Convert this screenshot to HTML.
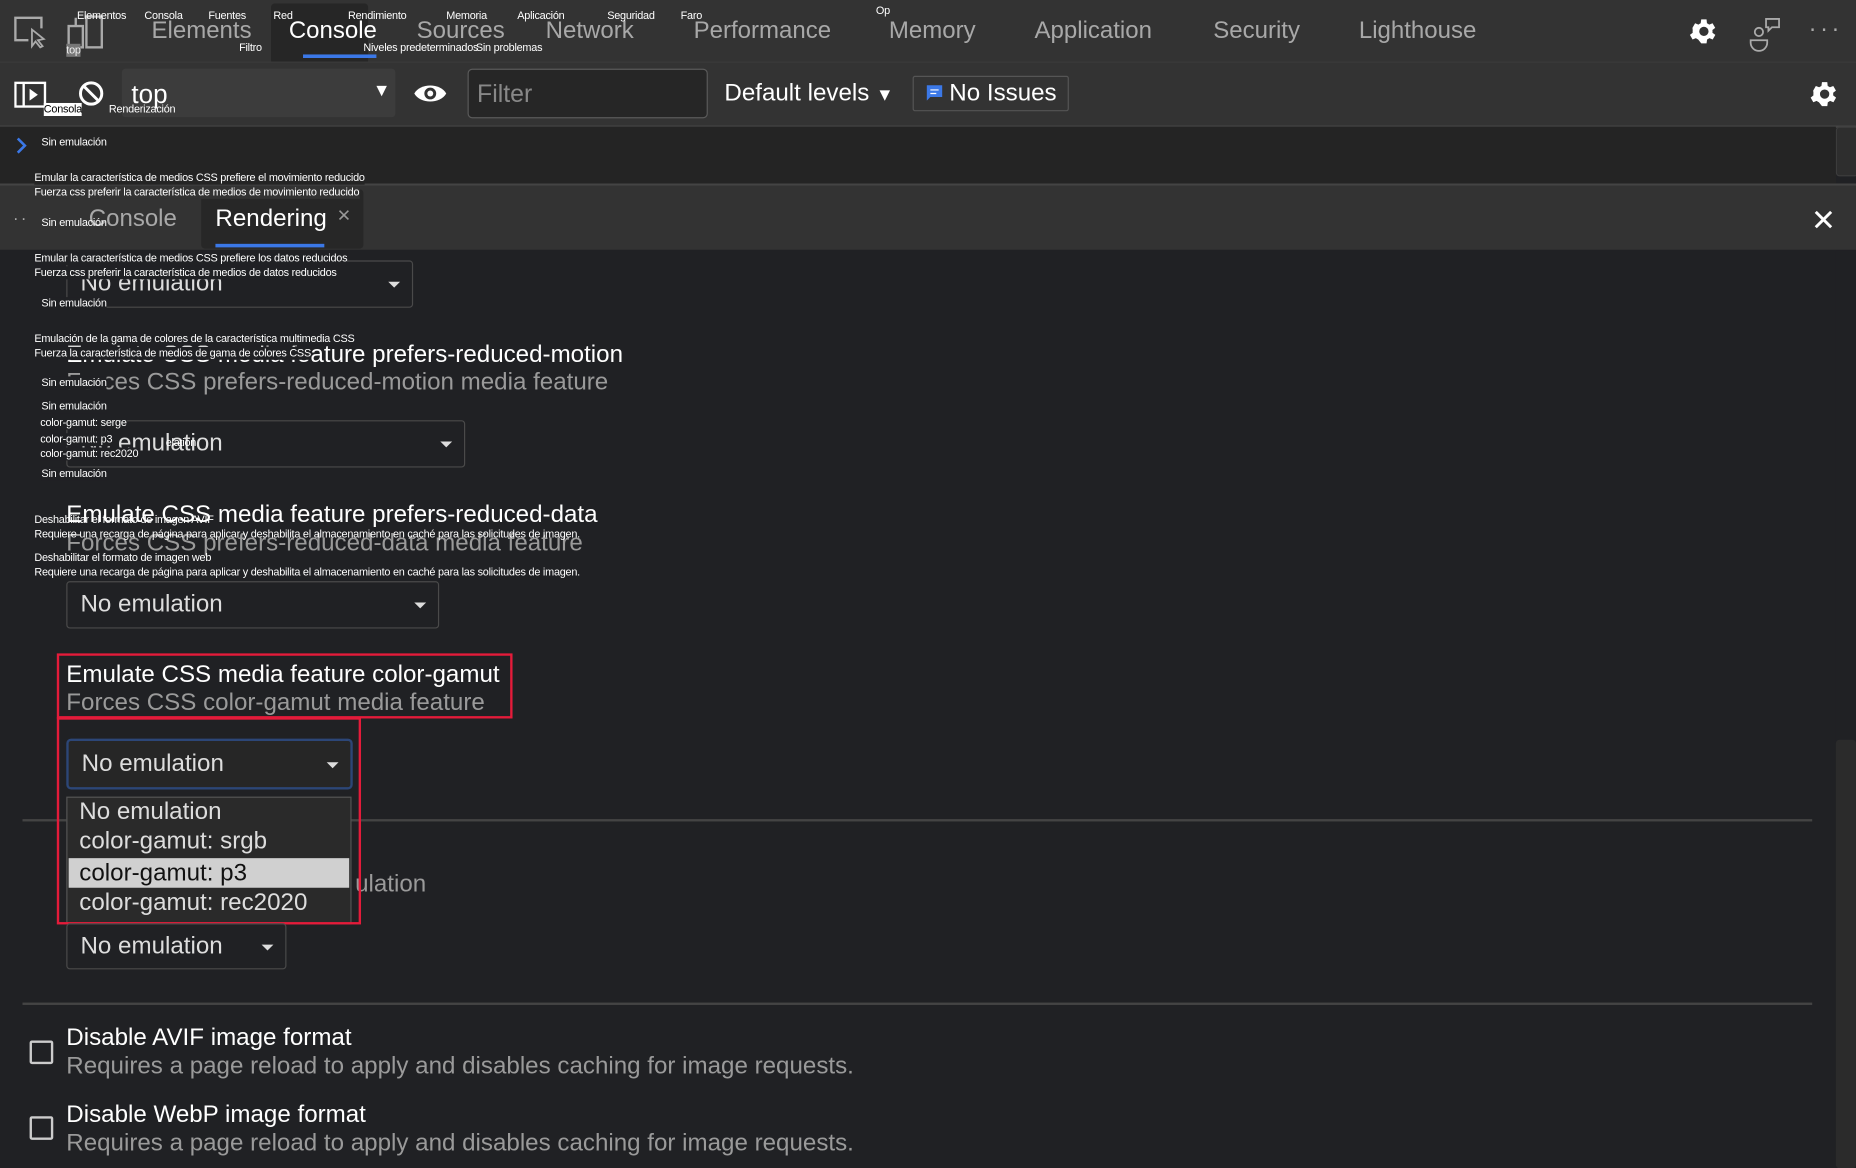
<!DOCTYPE html>
<html><head><meta charset="utf-8"><style>
html,body{margin:0;padding:0;width:1856px;height:1168px;overflow:hidden;background:#202124}
#r{position:relative;width:1568px;height:987px;transform:scale(1.18367);transform-origin:0 0;font-family:"Liberation Sans",sans-serif;background:#202124;overflow:hidden}
.a{position:absolute;white-space:nowrap}
.t{font-size:20.3px;line-height:24px;color:#a8a8a8}
.s{font-size:9.2px;line-height:11px;color:#fff;letter-spacing:-0.2px;background:#202124}
.s2{font-size:9.2px;line-height:11px;color:#fff;letter-spacing:-0.2px}
.h{font-size:20.4px;line-height:24px;color:#fff}
.sub{font-size:20.4px;line-height:24px;color:#9a9a9a}
.sel{position:absolute;border:1.5px solid #4a4a4a;border-radius:3px;background:#202124;box-sizing:border-box}
.sel span{position:absolute;left:11px;top:50%;transform:translateY(-50%);font-size:20.4px;color:#ddd}
.sel i{position:absolute;right:10px;top:50%;margin-top:-2px;border-left:5px solid transparent;border-right:5px solid transparent;border-top:5px solid #ddd}
</style></head><body><div id="r">
<div class="a" style="left:0;top:0;width:1568px;height:52px;background:#333"></div>
<div class="a" style="left:229px;top:3px;width:82px;height:51px;background:#262626;border-radius:3px"></div>
<div class="a" style="left:256px;top:46px;width:62px;height:3px;background:#3b78e7"></div>
<svg class="a" style="left:10px;top:12px" width="32" height="30" viewBox="0 0 32 30"><path d="M14 22H3V3h22v9" fill="none" stroke="#aaa" stroke-width="2"/><path d="M17 13l0 14 3-4 4 5 2-1-4-5 5-1z" fill="#333" stroke="#aaa" stroke-width="1.5"/></svg>
<svg class="a" style="left:55px;top:12px" width="36" height="32" viewBox="0 0 36 32"><rect x="18" y="2" width="13" height="26" fill="none" stroke="#aaa" stroke-width="2"/><rect x="3" y="10" width="12" height="18" fill="none" stroke="#aaa" stroke-width="2"/><path d="M9 3v7" stroke="#aaa" stroke-width="2"/></svg>
<div class="a t" style="left:128px;top:14px">Elements</div>
<div class="a t" style="left:244px;top:14px;color:#fff">Console</div>
<div class="a t" style="left:352px;top:14px">Sources</div>
<div class="a t" style="left:461px;top:14px">Network</div>
<div class="a t" style="left:586px;top:14px">Performance</div>
<div class="a t" style="left:751px;top:14px">Memory</div>
<div class="a t" style="left:874px;top:14px">Application</div>
<div class="a t" style="left:1025px;top:14px">Security</div>
<div class="a t" style="left:1148px;top:14px">Lighthouse</div>
<div class="a s2" style="left:65px;top:8px">Elementos</div>
<div class="a s2" style="left:122px;top:8px">Consola</div>
<div class="a s2" style="left:176px;top:8px">Fuentes</div>
<div class="a s2" style="left:231px;top:8px">Red</div>
<div class="a s2" style="left:294px;top:8px">Rendimiento</div>
<div class="a s2" style="left:377px;top:8px">Memoria</div>
<div class="a s2" style="left:437px;top:8px">Aplicación</div>
<div class="a s2" style="left:513px;top:8px">Seguridad</div>
<div class="a s2" style="left:575px;top:8px">Faro</div>
<div class="a s2" style="left:740px;top:4px">Op</div>
<div class="a s2" style="left:202px;top:35px">Filtro</div>
<div class="a s2" style="left:307px;top:35px">Niveles predeterminados</div>
<div class="a s2" style="left:402px;top:35px">Sin problemas</div>
<div class="a s2" style="left:56px;top:37px;background:#777;color:#eee">top</div>
<svg class="a" style="left:1426px;top:13px" width="27" height="27" viewBox="0 0 24 24"><path fill="#fff" d="M19.4 13a7.5 7.5 0 0 0 0-2l2.1-1.6-2-3.5-2.5 1a7 7 0 0 0-1.7-1L15 3h-4l-.4 2.9a7 7 0 0 0-1.7 1l-2.5-1-2 3.5L4.6 11a7.5 7.5 0 0 0 0 2l-2.1 1.6 2 3.5 2.5-1a7 7 0 0 0 1.7 1L11 21h4l.4-2.9a7 7 0 0 0 1.7-1l2.5 1 2-3.5zM13 15.5a3.5 3.5 0 1 1 0-7 3.5 3.5 0 0 1 0 7z" transform="translate(-1 0)"/></svg>
<svg class="a" style="left:1476px;top:14px" width="30" height="30" viewBox="0 0 30 30"><circle cx="10" cy="13" r="3.5" fill="none" stroke="#aaa" stroke-width="1.5"/><path d="M3 20h14v2a7 7 0 0 1-14 0z" fill="none" stroke="#aaa" stroke-width="1.5"/><path d="M16 2h11v7h-6l-3 3v-3h-2z" fill="none" stroke="#aaa" stroke-width="1.5"/></svg>
<div class="a" style="left:1528px;top:14px;color:#aaa;font-size:20px;letter-spacing:3px">···</div>
<div class="a" style="left:0;top:52px;width:1568px;height:53px;background:#333;border-top:1px solid #3a3a3a;border-bottom:2px solid #444"></div>
<svg class="a" style="left:12px;top:68px" width="28" height="24" viewBox="0 0 28 24"><rect x="1" y="2" width="25" height="20" fill="none" stroke="#fff" stroke-width="2"/><path d="M8 2v20" stroke="#fff" stroke-width="2"/><path d="M13 7l7 5-7 5z" fill="#fff"/></svg>
<svg class="a" style="left:65px;top:67px" width="24" height="24" viewBox="0 0 24 24"><circle cx="12" cy="12" r="9" fill="none" stroke="#fff" stroke-width="2.5"/><path d="M6 6l12 12" stroke="#fff" stroke-width="2.5"/></svg>
<div class="a s2" style="left:37px;top:87px;background:#fff;color:#000">Consola</div>
<div class="a" style="left:103px;top:58px;width:231px;height:41px;background:#3c3c3c;border-radius:3px"></div>
<div class="a s2" style="left:92px;top:87px">Renderización</div>
<div class="a" style="left:111px;top:67px;font-size:22px;color:#fff">top</div>
<div class="a" style="left:315px;top:68px;color:#fff;font-size:15px">▼</div>
<svg class="a" style="left:349px;top:68px" width="29" height="22" viewBox="0 0 29 22"><path d="M1 11C6 2 23 2 28 11 23 20 6 20 1 11z" fill="#fff"/><circle cx="14.5" cy="11" r="5" fill="#333"/><circle cx="14.5" cy="11" r="2.5" fill="#fff"/></svg>
<div class="a" style="left:395px;top:58px;width:203px;height:42px;box-sizing:border-box;border:1.5px solid #5a5a5a;border-radius:4px;background:#262626"></div>
<div class="a" style="left:403px;top:68px;font-size:21px;color:#888">Filter</div>
<div class="a" style="left:612px;top:68px;font-size:20.4px;color:#fff">Default levels <span style="font-size:15px">▼</span></div>
<div class="a" style="left:771px;top:64px;width:132px;height:30px;box-sizing:border-box;border:1.5px solid #555;border-radius:2px"></div>
<svg class="a" style="left:782px;top:71px" width="15" height="15" viewBox="0 0 15 15"><path d="M1 1h13v10H4l-3 3z" fill="#3b78e7"/><path d="M4 5h7M4 8h5" stroke="#fff" stroke-width="1"/></svg>
<div class="a" style="left:802px;top:68px;font-size:20.4px;color:#fff">No Issues</div>
<svg class="a" style="left:1528px;top:66px" width="27" height="27" viewBox="0 0 24 24"><path fill="#fff" d="M19.4 13a7.5 7.5 0 0 0 0-2l2.1-1.6-2-3.5-2.5 1a7 7 0 0 0-1.7-1L15 3h-4l-.4 2.9a7 7 0 0 0-1.7 1l-2.5-1-2 3.5L4.6 11a7.5 7.5 0 0 0 0 2l-2.1 1.6 2 3.5 2.5-1a7 7 0 0 0 1.7 1L11 21h4l.4-2.9a7 7 0 0 0 1.7-1l2.5 1 2-3.5zM13 15.5a3.5 3.5 0 1 1 0-7 3.5 3.5 0 0 1 0 7z" transform="translate(-1 0)"/></svg>
<div class="a" style="left:0;top:107px;width:1551px;height:48px;background:#242424"></div>
<div class="a" style="left:1551px;top:107px;width:17px;height:40px;background:#2e2e2e;border:1px solid #3c3c3c;border-radius:3px"></div>
<svg class="a" style="left:12px;top:115px" width="12" height="16" viewBox="0 0 12 16"><path d="M3 2l6 6-6 6" fill="none" stroke="#3b78e7" stroke-width="2.2"/></svg>
<div class="a s2" style="left:35px;top:115px">Sin emulación</div>
<div class="a" style="left:0;top:155px;width:1568px;height:2px;background:#444"></div>
<div class="a" style="left:0;top:157px;width:1568px;height:54px;background:#333"></div>
<div class="a" style="left:170px;top:160px;width:137px;height:50px;background:#272727;border-radius:3px"></div>
<div class="a" style="left:182px;top:206px;width:92px;height:3px;background:#3b78e7"></div>
<div class="a" style="left:11px;top:176px;color:#aaa;font-size:14px;letter-spacing:2px">··</div>
<div class="a t" style="left:75px;top:173px">Console</div>
<div class="a h" style="left:182px;top:173px">Rendering</div>
<div class="a" style="left:285px;top:172px;color:#999;font-size:19px">×</div>
<svg class="a" style="left:1532px;top:177px" width="17" height="17" viewBox="0 0 17 17"><path d="M2 2l13 13M15 2L2 15" stroke="#fff" stroke-width="2.5"/></svg>
<div class="a s2" style="left:29px;top:145px;background:#242424">Emular la característica de medios CSS prefiere el movimiento reducido</div>
<div class="a s2" style="left:29px;top:157px;background:#333">Fuerza css preferir la característica de medios de movimiento reducido</div>
<div class="a s2" style="left:35px;top:183px">Sin emulación</div>
<div class="a" style="left:1551px;top:212px;width:17px;height:775px;background:#202124"></div>
<div class="a" style="left:1551px;top:625px;width:17px;height:362px;background:#2b2b2b;border-radius:3px"></div>
<div class="sel" style="left:56px;top:220px;width:293px;height:40px"><span>No emulation</span><i></i></div>
<div class="a s" style="left:29px;top:213px">Emular la característica de medios CSS prefiere los datos reducidos</div>
<div class="a s" style="left:29px;top:225px">Fuerza css preferir la característica de medios de datos reducidos</div>
<div class="a s" style="left:35px;top:251px">Sin emulación</div>
<div class="a h" style="left:56px;top:288px">Emulate CSS media feature prefers-reduced-motion</div>
<div class="a sub" style="left:56px;top:311px">Forces CSS prefers-reduced-motion media feature</div>
<div class="a s" style="left:29px;top:281px">Emulación de la gama de colores de la característica multimedia CSS</div>
<div class="a s" style="left:29px;top:293px">Fuerza la característica de medios de gama de colores CSS</div>
<div class="a s" style="left:35px;top:318px">Sin emulación</div>
<div class="sel" style="left:56px;top:355px;width:337px;height:40px"><span>No emulation</span><i></i></div>
<div class="a s" style="left:35px;top:338px">Sin emulación</div>
<div class="a s" style="left:34px;top:352px">color-gamut: serge</div>
<div class="a s" style="left:34px;top:366px">color-gamut: p3</div>
<div class="a s" style="left:34px;top:378px">color-gamut: rec2020</div>
<div class="a s2" style="left:140px;top:369px">elation</div>
<div class="a s" style="left:35px;top:395px">Sin emulación</div>
<div class="a h" style="left:56px;top:423px">Emulate CSS media feature prefers-reduced-data</div>
<div class="a sub" style="left:56px;top:447px">Forces CSS prefers-reduced-data media feature</div>
<div class="a s2" style="left:29px;top:434px">Deshabilitar el formato de imagen AVIF</div>
<div class="a s2" style="left:29px;top:446px">Requiere una recarga de página para aplicar y deshabilita el almacenamiento en caché para las solicitudes de imagen.</div>
<div class="a s2" style="left:29px;top:466px">Deshabilitar el formato de imagen web</div>
<div class="a s2" style="left:29px;top:478px">Requiere una recarga de página para aplicar y deshabilita el almacenamiento en caché para las solicitudes de imagen.</div>
<div class="sel" style="left:56px;top:491px;width:315px;height:40px"><span>No emulation</span><i></i></div>
<div class="a h" style="left:56px;top:558px">Emulate CSS media feature color-gamut</div>
<div class="a sub" style="left:56px;top:582px">Forces CSS color-gamut media feature</div>
<div class="a" style="left:19px;top:692px;width:1512px;height:1.5px;background:#444"></div>
<div class="a sub" style="left:300px;top:735px">ulation</div>
<div class="sel" style="left:56px;top:624px;width:242px;height:43px;border:2.5px solid #2c4677;border-radius:4px;background:#262626"><span>No emulation</span><i></i></div>
<div class="a" style="left:56px;top:673px;width:241px;height:108px;background:#2a2a2a;border:1px solid #555;box-sizing:border-box"></div>
<div class="a" style="left:58px;top:725px;width:237px;height:25px;background:#d0d0d0"></div>
<div class="a" style="left:67px;top:674px;font-size:20.4px;line-height:24px;color:#ddd">No emulation</div>
<div class="a" style="left:67px;top:699px;font-size:20.4px;line-height:24px;color:#ddd">color-gamut: srgb</div>
<div class="a" style="left:67px;top:726px;font-size:20.4px;line-height:24px;color:#111">color-gamut: p3</div>
<div class="a" style="left:67px;top:751px;font-size:20.4px;line-height:24px;color:#ddd">color-gamut: rec2020</div>
<div class="a" style="left:48px;top:552px;width:385px;height:55px;box-sizing:border-box;border:2px solid #e41b3a"></div>
<div class="a" style="left:48px;top:606px;width:257px;height:175px;box-sizing:border-box;border:2px solid #e41b3a"></div>
<div class="sel" style="left:56px;top:780px;width:186px;height:39px"><span>No emulation</span><i></i></div>
<div class="a" style="left:19px;top:847px;width:1512px;height:1.5px;background:#444"></div>
<div class="a" style="left:25px;top:879px;width:20px;height:20px;box-sizing:border-box;border:2px solid #ccc;border-radius:2px"></div>
<div class="a h" style="left:56px;top:865px">Disable AVIF image format</div>
<div class="a sub" style="left:56px;top:889px">Requires a page reload to apply and disables caching for image requests.</div>
<div class="a" style="left:25px;top:943px;width:20px;height:20px;box-sizing:border-box;border:2px solid #ccc;border-radius:2px"></div>
<div class="a h" style="left:56px;top:930px">Disable WebP image format</div>
<div class="a sub" style="left:56px;top:954px">Requires a page reload to apply and disables caching for image requests.</div>
</div></body></html>
